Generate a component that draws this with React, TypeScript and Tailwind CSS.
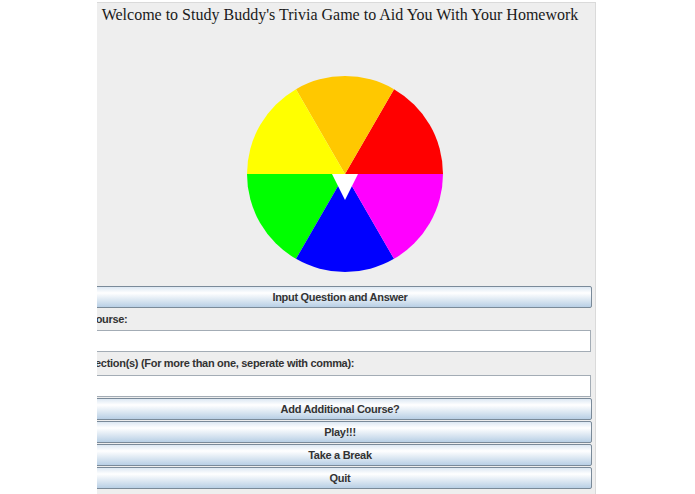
import React from 'react'

const buttonClass =
    'h-[22px] w-full flex items-center justify-center border border-[#7a8a99] rounded-[2px] bg-[linear-gradient(to_bottom,#dde8f3_0%,#ffffff_30%,#b8cfe5_100%)] text-[11px] tracking-[-0.3px] font-bold text-[#333333] leading-none'

const labelClass =
    'flex items-center text-[11px] tracking-[-0.3px] font-bold text-[#333333] whitespace-nowrap'

function Wheel() {
    return (
        <svg width="196" height="196" viewBox="0 0 196 196">
            <path d="M98 98 L196 98 A98 98 0 0 0 147 13.13 Z" fill="#ff0000" />
            <path d="M98 98 L147 13.13 A98 98 0 0 0 49 13.13 Z" fill="#ffc800" />
            <path d="M98 98 L49 13.13 A98 98 0 0 0 0 98 Z" fill="#ffff00" />
            <path d="M98 98 L0 98 A98 98 0 0 0 49 182.87 Z" fill="#00ff00" />
            <path d="M98 98 L49 182.87 A98 98 0 0 0 147 182.87 Z" fill="#0000ff" />
            <path d="M98 98 L147 182.87 A98 98 0 0 0 196 98 Z" fill="#ff00ff" />
            <polygon points="85,98 111,98 98,124" fill="#ffffff" />
        </svg>
    )
}

export default function App() {
    return (
        <div className="w-[695px] h-[494px] bg-white overflow-hidden font-['Liberation_Sans',Arial,sans-serif]">
            <div className="ml-[97px] mt-[2px] w-[499px] h-[492px] overflow-hidden bg-[#eeeeee] border-t border-r border-[#dadada]">
                <div className="-ml-[9px] w-[504px] flex flex-col">
                    <p className="mt-[2px] h-[20px] text-center text-[16px] leading-[20px] text-[#1a1a1a] font-['Liberation_Serif','Times_New_Roman',serif] whitespace-nowrap">
                        Welcome to Study Buddy's Trivia Game to Aid You With Your Homework
                    </p>
                    <div className="mt-[51px] ml-[159px]">
                        <Wheel />
                    </div>
                    <div className="mt-[14px] flex flex-col">
                        <button className={buttonClass}>Input Question and Answer</button>
                        <label className={`h-[22px] ${labelClass}`}>Course:</label>
                        <input className="h-[22px] w-[503px] bg-white border border-[#a3acb5] outline-none" />
                        <label className={`h-[23px] ${labelClass}`}>
                            Section(s) (For more than one, seperate with comma):
                        </label>
                        <input className="h-[22px] w-[503px] bg-white border border-[#a3acb5] outline-none" />
                        <div className="mt-[1px] flex flex-col gap-[1px]">
                            <button className={buttonClass}>Add Additional Course?</button>
                            <button className={buttonClass}>Play!!!</button>
                            <button className={buttonClass}>Take a Break</button>
                            <button className={buttonClass}>Quit</button>
                        </div>
                    </div>
                </div>
            </div>
        </div>
    )
}
